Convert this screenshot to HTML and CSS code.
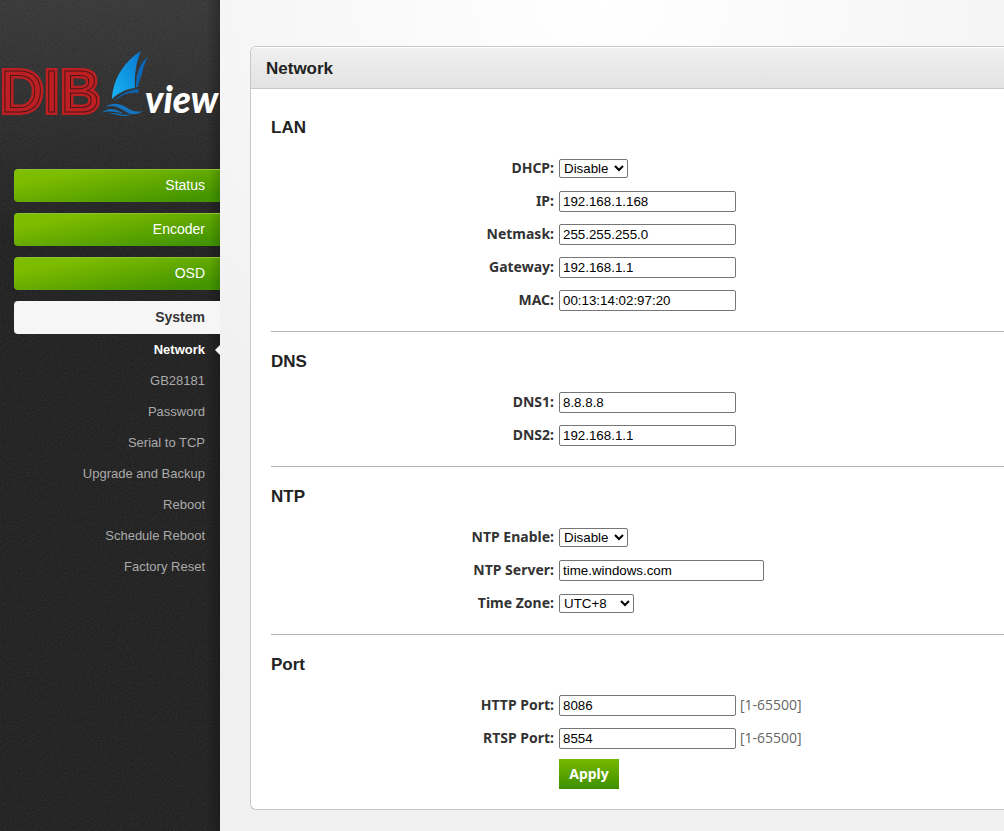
FILE: index.html
```html
<!DOCTYPE html>
<html lang="en">
<head>
  <meta charset="UTF-8">
  <title>Network</title>
  <meta name="viewport" content="width=device-width, initial-scale=1.0">
  <link rel="stylesheet" href="styles.css">
</head>
<body>

  <aside class="sidebar">
    <svg class="logo" viewBox="0 0 220 90" role="img" aria-label="DIB view">
      <defs>
        <linearGradient id="sail" x1="0" y1="1" x2="1" y2="0">
          <stop offset="0" stop-color="#18b4f4"/>
          <stop offset="1" stop-color="#0878d0"/>
        </linearGradient>
      </defs>
      <text class="logo-dib" x="0" y="72">DIB</text>
      <text class="logo-dib-line" x="0" y="72" aria-hidden="true">DIB</text>
      <path fill="url(#sail)" d="M141 11C125 21 113 38 112 59C118 53 126 49 135 48C134 36 136 22 141 11Z"/>
      <path fill="#0c66b8" d="M148 17C140 23 139 29 137 35C136 40 136 44 136 47L138 47C139 42 140 39 142 34C143 28 145 22 148 17Z"/>
      <path fill="#0c62ad" d="M113 62C121 53 129 50 139 49L138 53C129 52 122 55 113 62Z"/>
      <path fill="#1474bd" d="M105 67C114 61 122 64 129 69C134 72 139 72 143 71C136 76 130 75 123 70C116 66 111 65 105 67Z"/>
      <path fill="#1474bd" d="M101 73C110 66 117 69 124 74C116 72 110 70 101 73Z"/>
      <path fill="#1474bd" d="M108 74C117 71 122 77 132 74C123 79 117 73 108 74Z"/>
      <text class="logo-view" x="145" y="73">view</text>
    </svg>

    <nav>
      <ul class="menu">
        <li><a class="menu-item" href="#">Status</a></li>
        <li><a class="menu-item" href="#">Encoder</a></li>
        <li><a class="menu-item" href="#">OSD</a></li>
        <li>
          <a class="menu-item current" href="#">System</a>
          <ul class="submenu">
            <li><a class="current" href="#">Network</a></li>
            <li><a href="#">GB28181</a></li>
            <li><a href="#">Password</a></li>
            <li><a href="#">Serial to TCP</a></li>
            <li><a href="#">Upgrade and Backup</a></li>
            <li><a href="#">Reboot</a></li>
            <li><a href="#">Schedule Reboot</a></li>
            <li><a href="#">Factory Reset</a></li>
          </ul>
        </li>
      </ul>
    </nav>
  </aside>

  <main class="content">
    <div class="panel">
      <h1>Network</h1>

      <form class="panel-body">
        <section>
          <h2>LAN</h2>
          <div class="row">
            <label for="dhcp">DHCP:</label>
            <select id="dhcp"><option>Disable</option><option>Enable</option></select>
          </div>
          <div class="row">
            <label for="ip">IP:</label>
            <input type="text" id="ip" value="192.168.1.168">
          </div>
          <div class="row">
            <label for="netmask">Netmask:</label>
            <input type="text" id="netmask" value="255.255.255.0">
          </div>
          <div class="row">
            <label for="gateway">Gateway:</label>
            <input type="text" id="gateway" value="192.168.1.1">
          </div>
          <div class="row">
            <label for="mac">MAC:</label>
            <input type="text" id="mac" value="00:13:14:02:97:20">
          </div>
        </section>

        <section>
          <h2>DNS</h2>
          <div class="row">
            <label for="dns1">DNS1:</label>
            <input type="text" id="dns1" value="8.8.8.8">
          </div>
          <div class="row">
            <label for="dns2">DNS2:</label>
            <input type="text" id="dns2" value="192.168.1.1">
          </div>
        </section>

        <section>
          <h2>NTP</h2>
          <div class="row">
            <label for="ntpEnable">NTP Enable:</label>
            <select id="ntpEnable"><option>Disable</option><option>Enable</option></select>
          </div>
          <div class="row">
            <label for="ntpServer">NTP Server:</label>
            <input type="text" id="ntpServer" class="wide" value="time.windows.com">
          </div>
          <div class="row">
            <label for="timeZone">Time Zone:</label>
            <select id="timeZone" class="zone"><option>UTC+8</option></select>
          </div>
        </section>

        <section>
          <h2>Port</h2>
          <div class="row">
            <label for="httpPort">HTTP Port:</label>
            <input type="text" id="httpPort" value="8086">
            <span class="hint">[1-65500]</span>
          </div>
          <div class="row">
            <label for="rtspPort">RTSP Port:</label>
            <input type="text" id="rtspPort" value="8554">
            <span class="hint">[1-65500]</span>
          </div>
          <div class="actions">
            <button type="button">Apply</button>
          </div>
        </section>
      </form>
    </div>
  </main>

</body>
</html>
```

FILE: styles.css
```css
* {
  box-sizing: border-box;
}

body {
  margin: 0;
  display: flex;
  min-height: 100vh;
  font-family: Arial, "Liberation Sans", sans-serif;
  color: #222;
  background: #f0f0f0 radial-gradient(ellipse 600px 500px at 600px 0, #fff, #f0f0f0);
}

ul {
  list-style: none;
  margin: 0;
  padding: 0;
}

a {
  text-decoration: none;
}

/* sidebar */
.sidebar {
  flex: 0 0 220px;
  padding-top: 40px;
  background:
    linear-gradient(to right, transparent 206px, rgba(0, 0, 0, 0.25)),
    url("data:image/svg+xml,%3Csvg xmlns='http://www.w3.org/2000/svg' width='200' height='200'%3E%3Cfilter id='n'%3E%3CfeTurbulence type='fractalNoise' baseFrequency='0.8' numOctaves='2' stitchTiles='stitch'/%3E%3CfeColorMatrix type='saturate' values='0'/%3E%3C/filter%3E%3Crect width='200' height='200' filter='url(%23n)' opacity='0.14'/%3E%3C/svg%3E"),
    linear-gradient(#323232, #1a1a1a 240px);
}

.logo {
  display: block;
  width: 100%;
  margin-bottom: 39px;
}

.logo-dib,
.logo-dib-line {
  font-size: 60px;
  fill: #bd1f22;
  stroke: #bd1f22;
  stroke-width: 6;
}

.logo-dib-line {
  stroke: #45191a;
  stroke-width: 1;
}

.logo-view {
  font-family: Lato, sans-serif;
  font-size: 37px;
  font-weight: 900;
  font-style: italic;
  fill: #fff;
}

.menu {
  padding-left: 14px;
}

.menu > li {
  margin-bottom: 11px;
}

.menu-item {
  display: block;
  padding-right: 15px;
  border-radius: 4px 0 0 4px;
  font-size: 14px;
  line-height: 33px;
  text-align: right;
  color: #fff;
  background: linear-gradient(to right, transparent 195px, rgba(0, 0, 0, 0.15)), linear-gradient(170deg, #7ebc00 20%, #439400 90%);
  box-shadow: inset 0 1px #8cc22c;
}

.menu-item.current {
  font-weight: bold;
  color: #333;
  background: #f6f6f6;
  box-shadow: none;
}

.submenu a {
  display: block;
  position: relative;
  padding-right: 15px;
  font-size: 13px;
  line-height: 31px;
  text-align: right;
  color: #aaa;
}

.submenu .current {
  font-weight: bold;
  color: #fff;
}

.submenu .current::after {
  content: "";
  position: absolute;
  right: 0;
  top: 11px;
  border: 5px solid transparent;
  border-right-color: #f6f6f6;
  border-left: 0;
}

/* content */
.content {
  flex: 1;
  min-width: 0;
  padding: 46px 0 21px 30px;
}

.panel {
  border: 1px solid #c8c8c8;
  border-right: 0;
  border-radius: 6px 0 0 6px;
  background: #fff;
  overflow: hidden;
}

h1 {
  margin: 0;
  padding: 2px 0 0 15px;
  border-bottom: 1px solid #c8c8c8;
  font-size: 17px;
  line-height: 39px;
  background: linear-gradient(#f0f0f0, #e3e3e3);
  box-shadow: inset 0 1px #fff;
}

.panel-body {
  padding: 9px 0 6px 20px;
}

section {
  padding: 20px 0 14px;
  border-bottom: 1px solid #b4b4b4;
}

section:last-child {
  border-bottom: 0;
}

h2 {
  margin: 0 0 14px;
  font-size: 17px;
  line-height: 20px;
}

.row {
  display: flex;
  align-items: center;
  height: 33px;
}

label {
  width: 283px;
  margin-right: 5px;
  padding-bottom: 2px;
  font-family: "Noto Sans", "Open Sans", sans-serif;
  font-size: 14px;
  font-weight: bold;
  text-align: right;
  color: #333;
}

input,
select {
  border: 1px solid #767676;
  border-radius: 2px;
  font-family: Arial, "Liberation Sans", sans-serif;
  color: #000;
  background-color: #fff;
}

input {
  width: 177px;
  height: 21px;
  padding: 1px 3px;
}

input.wide {
  width: 205px;
}

select {
  width: 69px;
  height: 19px;
}

select.zone {
  width: 75px;
}

.hint {
  margin-left: 4px;
  padding-bottom: 2px;
  font-family: "Open Sans", "Noto Sans", sans-serif;
  font-size: 14px;
  color: #666;
}

.actions {
  padding: 4px 0 0 288px;
}

button {
  display: block;
  width: 60px;
  height: 30px;
  padding: 0 0 2px;
  border: 0;
  font-family: "Noto Sans", "Open Sans", sans-serif;
  font-size: 14px;
  font-weight: bold;
  color: #fff;
  background: linear-gradient(#76b800, #3f9000);
  cursor: pointer;
}
```
